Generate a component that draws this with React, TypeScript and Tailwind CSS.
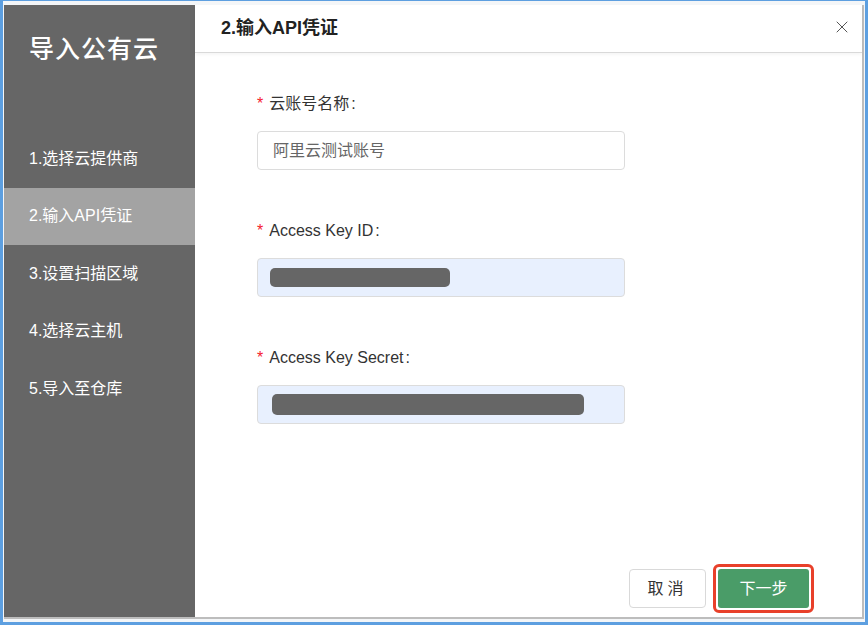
import { X } from "lucide-react";

const steps = [
  "1.选择云提供商",
  "2.输入API凭证",
  "3.设置扫描区域",
  "4.选择云主机",
  "5.导入至仓库",
];

function Label({ text }: { text: string }) {
  return (
    <div className="flex items-center text-[16px] leading-5 text-[#333]">
      <span className="mr-1.5 text-[#f5222d]">*</span>
      {text}
      <span className="ml-0.5">:</span>
    </div>
  );
}

export default function App() {
  return (
    <div
      className="h-[625px] w-[868px] overflow-hidden border-x-[3px] border-b-[3px] border-t-[1px] border-[#5d9fe0] bg-[#f4f6f8]"
      style={{ fontFamily: '"Liberation Sans", "Noto Sans CJK SC", sans-serif' }}
    >
      <div className="ml-px mt-1 flex h-[614px] w-[860px] border-b-2 border-r-2 border-[#bdbdbd] bg-white">
        {/* sidebar */}
        <div className="flex w-[191px] shrink-0 flex-col bg-[#666666] text-white">
          <div className="pl-[25px] pt-[28px] text-[25px] font-medium leading-8 tracking-[1px]">
            导入公有云
          </div>
          <div className="mt-[65px] flex flex-col">
            {steps.map((s, i) => (
              <div
                key={s}
                className={`flex h-[57.5px] items-center pl-[25px] text-[16px] ${
                  i === 1 ? "bg-[#a3a3a3]" : ""
                }`}
              >
                {s}
              </div>
            ))}
          </div>
        </div>

        {/* content */}
        <div className="flex flex-1 flex-col">
          <div className="relative flex h-[48px] shrink-0 items-center border-b border-[#d9d9d9] pl-[26px] shadow-[0_2px_3px_rgba(0,0,0,0.04)]">
            <span className="text-[18px] font-semibold text-[#222]">2.输入API凭证</span>
            <X className="absolute right-[10px] top-[12px] h-[20px] w-[20px] text-[#555]" strokeWidth={1.2} />
          </div>

          <div className="flex flex-1 flex-col pl-[62px] pt-[41px]">
            <Label text="云账号名称" />
            <div className="mt-[17px] flex h-[39px] w-[368px] items-center rounded border border-[#dcdcdc] pl-[15px] text-[16px] text-[#666]">
              阿里云测试账号
            </div>

            <div className="mt-[51px]">
              <Label text="Access Key ID" />
            </div>
            <div className="mt-[17px] flex h-[39px] w-[368px] items-center rounded border border-[#dcdcdc] bg-[#e8f0fe] pl-[12px]">
              <div className="h-[19px] w-[180px] rounded-[5px] bg-[#666]" />
            </div>

            <div className="mt-[51px]">
              <Label text="Access Key Secret" />
            </div>
            <div className="mt-[17px] flex h-[39px] w-[368px] items-center rounded border border-[#dcdcdc] bg-[#e8f0fe] pl-[14px]">
              <div className="h-[21px] w-[312px] rounded-[5px] bg-[#666]" />
            </div>

            <div className="mt-auto mb-[4px] flex justify-end gap-[7px] pr-[48px]">
              <button className="mt-[5px] h-[39px] w-[77px] rounded border border-[#d9d9d9] bg-white text-[16px] tracking-[4px] text-[#333]">
                取消
              </button>
              <div className="rounded-[6px] border-[3px] border-[#e8402a] p-[2px]">
                <button className="h-[39px] w-[91px] rounded-[3px] bg-[#4a9c68] text-[16px] text-white">
                  下一步
                </button>
              </div>
            </div>
          </div>
        </div>
      </div>
    </div>
  );
}
